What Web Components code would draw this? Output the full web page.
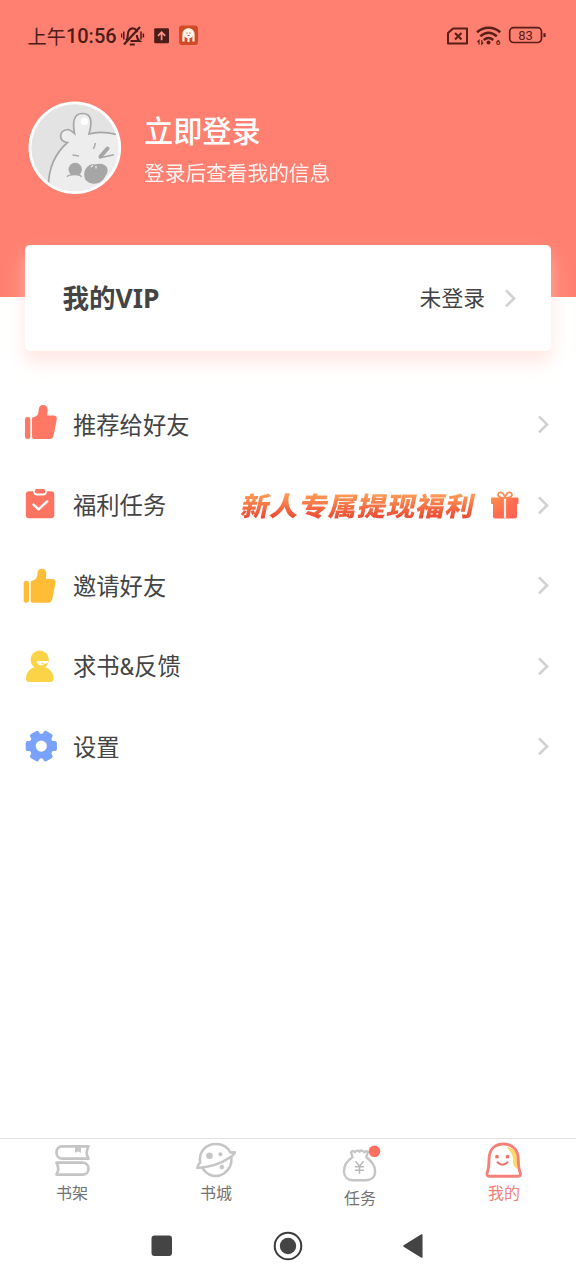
<!DOCTYPE html>
<html lang="zh-CN">
<head>
<meta charset="utf-8">
<title>我的</title>
<style>
html,body{margin:0;padding:0;background:#fff}
body{width:576px;height:1280px;overflow:hidden;font-family:Roboto,"Noto Sans CJK SC",sans-serif;color:#444}
</style>
</head>
<body>
<profile-page></profile-page>
<script>
const define=(name,html)=>customElements.define(name,class extends HTMLElement{
  constructor(){super();this.attachShadow({mode:'open'});}
  connectedCallback(){
    const t=document.createElement('template');
    t.innerHTML=typeof html==='function'?html(this):html;
    this.shadowRoot.replaceChildren(t.content.cloneNode(true));
  }
});

const thumb='<rect x="5" y="12.5" width="5.3" height="22" rx="2.4"/><path d="M12 14.2q0-1.7 1.7-1.9c3.5-.5 4.700-2.600 4.900-6.500C18.700 2.300 20.500.500 23.200.500c3 0 4.500 2 4.400 5l-.4 5.300h6.300c2.400 0 3.800 1.500 3.300 3.800l-3.200 16.200c-.5 2.400-1.900 3.700-4.200 3.700H14.500q-2.500 0-2.500-2.500z"/>';
const icons={
  like:`<g fill="#ff7866" transform="translate(0 .6)">${thumb}</g>`,
  invite:`<g fill="#ffbd35" transform="translate(-1.300 3.300)">${thumb}</g>`,
  task:'<path fill="#ff7362" d="M9 6.200h4.200q.4 4.300 3.500 4.300h6.800q3.100 0 3.500-4.300H31q3.300 0 3.300 3.300v20.500q0 3.200-3.300 3.200H9q-3.200 0-3.200-3.200V9.500q0-3.300 3.200-3.300z"/><rect fill="#ff7362" x="14.800" y="4" width="10.500" height="4.600" rx="2"/><path d="m13.500 19.700 5 4.600 8.700-8" fill="none" stroke="#fff" stroke-width="2.500" stroke-linecap="round" stroke-linejoin="round"/>',
  person:'<circle cx="19.700" cy="13.800" r="9.200" fill="#fad347"/><path d="M6 32.500c0-7.500 6-12 13.700-12s13.900 4.500 13.900 12q0 3.500-3.500 3.500H9.500Q6 36 6 32.500z" fill="#fad347"/><path d="M16.800 15h11.400q.8.500 0 1.400-1.800 1.400-4.200 1.700-1.500 1.500-3.300 1.300-3.400-.6-3.900-4.400z" fill="#fff"/><path d="M21.500 17.300h2" stroke="#fad347" stroke-width="1.200"/>',
  gear:'<g transform="translate(21.300 20.100)" fill="#7aa2fb"><circle r="12.300"/><g id="t"><rect x="-15.600" y="-5" width="31.200" height="10" rx="2.200"/><rect x="-15.600" y="-5" width="31.200" height="10" rx="2.200" transform="rotate(60)"/><rect x="-15.600" y="-5" width="31.200" height="10" rx="2.200" transform="rotate(120)"/></g><circle r="5.600" fill="#fff"/></g>'
};
define('menu-icon',el=>`<style>:host{display:block;width:40px;height:40px}svg{display:block}</style><svg width="40" height="40" viewBox="0 0 40 40">${icons[el.getAttribute('name')]}</svg>`);

define('chevron-icon','<style>:host{display:block;width:14px;height:20px}svg{display:block}</style><svg width="14" height="20" viewBox="0 0 14 20" fill="none" stroke="#d2d2d2" stroke-width="2.700"><path d="m2 2.400 8 8-8 8"/></svg>');

define('status-bar',`<style>
:host{display:flex;height:72px;box-sizing:border-box;padding:0 28px 0 27.500px;align-items:center;color:#4b1d1a}
.time{font-size:20px;line-height:28px;white-space:nowrap;width:93.500px;font-weight:500}
.zh{font-size:19.200px;font-weight:400}
.time,.zh{position:relative;top:.5px}
svg{display:block;flex:none}.right{margin-left:auto}
.bat text{font:400 13px Roboto,sans-serif}
</style>
<span class="time"><span class="zh">上午</span>10:56</span>
<svg width="80" height="24" viewBox="121 24 80 24" fill="none" stroke="#4b1d1a">
 <path d="M126 40.500c1.700-1.400 1.800-3 1.800-5.500 0-4 1.500-6.200 4.700-6.800 2.500.2 4.200 1.500 4.700 4M130.500 41h9c-2.300-1.800-2.600-3.200-2.700-6M129.800 44.500h5" stroke-width="2"/>
 <path d="m124 44.500 16-17.500" stroke-width="2.200"/>
 <path d="M123.800 31.500v8M121.500 33.500v4M141 31.500v8M143.400 33.500v4" stroke-width="1.500"/>
 <rect x="154.200" y="28.200" width="14.800" height="15" rx="1.200" fill="#4b1d1a" stroke="none"/>
 <path d="M161.600 40.300v-8m-3.600 3.500 3.600-3.600 3.600 3.600" stroke="#ff9588" stroke-width="1.700"/>
 <rect x="179" y="25.500" width="19" height="19.500" rx="3" fill="#cf4c27" stroke="none"/>
 <path d="M183.500 41.500v-7c0-7 10-7 10 0v7" stroke="#fff0e6" stroke-width="2.200"/><circle cx="188.500" cy="33.500" r="5" fill="#fff3ea" stroke="none"/><path d="M188.500 38v4" stroke="#fff0e6" stroke-width="2"/><path d="M186.300 33h1.300m1.700 0h1.300M187.500 35.500h2" stroke="#a05040" stroke-width=".9"/>
</svg>
<svg class="bat right" style="margin-right:1px" width="100" height="24" viewBox="447 24 100 24" fill="none" stroke="#591e1a">
 <path d="M453 28.500h14v15h-19V33z" stroke-width="2" stroke-linejoin="round"/><path d="m455 33 6.500 6.500m0-6.500-6.500 6.500" stroke-width="2.100"/>
 <path d="M477 32.200c7-6 16.500-6 23.200 0M480.300 36.200c5.300-4.400 11.300-4.400 16.500 0M483.700 40c3.300-2.600 6.400-2.600 9.600 0" stroke-width="2.500"/><circle cx="488.500" cy="42.500" r="2" fill="#591e1a" stroke="none"/>
 <path d="M479 44.500v-4l-1.500 1.500M481.800 40v4l1.400-1.400" stroke-width="1.200"/>
 <text x="495.800" y="45" fill="#591e1a" stroke="none" style="font-size:8px;font-weight:700">6</text>
 <rect x="509.700" y="27.700" width="31.800" height="14.800" rx="4" stroke-width="1.700"/><path d="M544.500 33.200v3.800" stroke-width="2.200"/>
 <text x="525.500" y="39.900" text-anchor="middle" fill="#591e1a" stroke="none">83</text>
</svg>`);

define('user-avatar',`<style>:host{display:block;width:94px;height:94px;flex:none}svg{display:block}</style>
<svg width="94" height="94" viewBox="28.500 101 94 94">
<defs><clipPath id="c"><circle cx="75.300" cy="147.800" r="43.500"/></clipPath></defs>
<circle cx="75.300" cy="147.800" r="46.300" fill="#fff"/><circle cx="75.300" cy="147.800" r="43.500" fill="#e3e3e3"/>
<g clip-path="url(#c)"><path d="M49 186c0-18 6-32 19-43.500-9.500-1.500-9-12 .5-13 2.500.5 4.500 2 6.500 4-2-11-1.200-20 8-20s10 8.500 6.500 20.500c9-2.800 17-2 28 .5H140V200H49z" fill="#ededed" stroke="#a6a6a6" stroke-width="1.700"/>
<circle cx="85" cy="121.500" r="3.700" fill="#fff"/><path d="m96 143-2 6M73 155l6.500 1" stroke="#aaa" stroke-width="1.500" fill="none"/>
<path d="m108 148.500-7 8" stroke="#a6a6a6" stroke-width="4" stroke-linecap="round"/><path d="m99.500 158 15-3.300" stroke="#a6a6a6" stroke-width="1.600"/>
<circle cx="75.700" cy="169.500" r="6.700" fill="#a6a6a6"/><path d="M67.500 178.500q0-2.500 2.500-2.800 6-2.200 11.500 0l1 4H68z" fill="#ededed"/><path d="M67.500 177q1-2 3-1.900 5-1 9 0 1.500 0 2.500 2" stroke="#a6a6a6" stroke-width="1.200" fill="none"/>
<path d="M86 180c-4-8 2-17 9-15.500 12-3 16.500 5 10.500 12-3 8-14 9.500-19.500 3.500z" fill="#a6a6a6"/><path d="m91.500 167 2-1.500m3 3v-2.500" stroke="#eee" stroke-width="1.300"/></g></svg>`);

define('profile-header',`<style>
:host{display:block;height:296.500px;background:#ff8071;color:#fff}
.user{display:flex;align-items:center;margin:29px 0 0 28px;gap:22px;height:94px}
h1{margin:0;font:500 29.200px/38px "Noto Sans CJK SC",sans-serif}
p{margin:9px 0 0;font-size:20.700px;line-height:34px;opacity:.9}
.copy{margin-top:4px}
</style><status-bar></status-bar>
<div class="user"><user-avatar></user-avatar><div class="copy"><h1>立即登录</h1><p>登录后查看我的信息</p></div></div>`);

define('vip-card',`<style>
:host{display:flex;align-items:center;position:relative;box-sizing:border-box;width:526px;height:105.500px;margin:-51.500px auto 0;padding:0 33px 0 37.500px;background:#fff;border-radius:5px;box-shadow:0 11px 18px rgba(255,214,206,.6)}
h2{margin:0;font:700 26.500px/40px "Noto Sans","Noto Sans CJK SC",sans-serif;color:#444}
.state{margin:3px 19px 0 auto;font-size:21.800px;line-height:32px}
</style><h2>我的VIP</h2><span class="state">未登录</span><chevron-icon></chevron-icon>`);

define('promo-banner',`<style>
:host{display:flex;align-items:center;margin-left:auto}
.t{font:900 28.500px/36px "Noto Sans CJK SC",sans-serif;letter-spacing:.7px;transform:skewX(-12deg) scaleY(.93);background:linear-gradient(#ff9c58 18%,#ec4d34 85%);-webkit-background-clip:text;background-clip:text;color:transparent;white-space:nowrap}
svg{display:block;margin:0 17px 0 14px}
</style><span class="t">新人专属提现福利</span>
<svg width="30" height="30" viewBox="0 0 30 30"><defs><linearGradient id="g" x1="0" x2="1" y2="1"><stop stop-color="#ff914f"/><stop offset=".5" stop-color="#ff6d50"/><stop offset="1" stop-color="#ff6257"/></linearGradient></defs>
<path fill="url(#g)" d="M2 7.500h25.500q1 0 1 1v4.500q0 1-1 1h-.5v12.500q0 2-2 2H5q-2 0-2-2V14H2q-1 0-1-1V8.500q0-1 1-1z"/><path d="M15 8v20.500" stroke="#ffece4" stroke-width="2.200"/><path d="M15 8Q8.500 8 8 5c0-3.800 5.500-4.200 7 3 1.500-7.200 7-6.800 7-3q-.5 3-7 3z" fill="none" stroke="#f88b55" stroke-width="1.700"/></svg>`);

define('menu-row',el=>`<style>
:host{display:flex;align-items:center;height:80.500px;padding:0 25px 0 20px}
.label{margin:3px 0 0 13px;font-size:23.300px;line-height:34px;color:#444;white-space:nowrap}
chevron-icon{margin-left:auto}
::slotted(promo-banner){margin-left:auto}
chevron-icon.tight{margin-left:0}
</style><menu-icon name="${el.getAttribute('icon')}"></menu-icon><span class="label">${el.getAttribute('label')}</span><slot></slot><chevron-icon class="${el.children.length?'tight':''}"></chevron-icon>`);

const tabs={
 shelf:'<g transform="translate(-1.500 1)"><g stroke="#c5c5c5" stroke-width="2.700" stroke-linejoin="round"><path d="M39 3.300H13c-8 0-8 12.400 0 12.400h26q-3.500-6 0-12.400zM7 19.700h26c8 0 8 11.900 0 11.900H7q3.500-6 0-11.900z"/></g><path d="M25.500 4h6v5.700l-3-1.300-3 1.300z" fill="#c5c5c5"/></g>',
 city:'<g stroke="#c5c5c5" stroke-width="2.500" stroke-linecap="round" stroke-linejoin="round"><path d="M5.200 20.500C3.500 9.500 11 2 20.800 2c6.500 0 11.800 3 14.600 8.500l4.400-.2q-.5 2.500-5.300 5.500C23 23.500 13 25.500 2.300 26q.3-3 2.900-5.500z"/><path d="M7.800 26.500C13 34.500 22 36 29 31.500c5.500-4 8-9.500 7.400-16"/></g><g fill="#c5c5c5"><circle cx="14.500" cy="13.800" r="3.300"/><circle cx="25.500" cy="12.300" r="2"/><circle cx="26.800" cy="25" r="2.200"/></g>',
 task:'<g transform="translate(-1 -1.300)"><path d="M14.500 11.500 13 6.500q2-2.300 4 0 2-3 4.500-.500 2.500-2.500 4.500.500 2.500-2 4 0l-1.700 5c5.500 4 8.800 9 8.800 14 0 6-4 9-9 9H14.500c-5 0-8.500-3.500-8.500-9 0-5.500 3-10.500 8.500-14z" stroke="#c5c5c5" stroke-width="2.400" stroke-linejoin="round"/><path d="m17.500 15.500 4 5 4-5M17 21h9m-9 3.500h9M21.500 21v7" stroke="#b9b9b9" stroke-width="1.500"/></g><circle cx="35.500" cy="4.300" r="5.800" fill="#ff7061"/>',
 mine:'<g transform="translate(-1 .2)"><path d="M24.500 5c7 0 10.500 5 10.500 12.500 0 3.500 0 6 .5 9-4.500-2-4.500-6-4.500-9.500-.3-5-2.500-8-6.500-12z" fill="#ffd968"/><path d="M6.800 34q-2.300-.5-1.600-3.500C6.500 27 7 23 7 17.500 7 7 13 1.800 21.500 1.800S36.300 7 36.300 17.500c0 5.500.500 9.500 2 13q.6 3-1.700 3.500z" stroke="#f5807a" stroke-width="2.900" stroke-linejoin="round"/><circle cx="15" cy="14.500" r="1.900" fill="#ee756c"/><circle cx="25.500" cy="14.500" r="1.900" fill="#ee756c"/><path d="M15.500 20q5 5 10 0" stroke="#ee756c" stroke-width="2" stroke-linecap="round"/></g>'
};
define('tab-item',el=>`<style>
:host{display:flex;flex:1;flex-direction:column;align-items:center;padding-top:3px;color:#737373}
:host([icon="task"]){padding-top:8px}
:host([active]){color:#f08078}
svg{display:block}span{font-size:16px;line-height:24px;margin-top:5px}
</style><svg width="43" height="35" viewBox="0 0 43 35" fill="none" style="overflow:visible">${tabs[el.getAttribute('icon')]}</svg><span><slot></slot></span>`);

define('tab-bar',`<style>:host{display:flex;height:72px;border-top:1px solid #e3e3e3}</style>
<tab-item icon="shelf">书架</tab-item><tab-item icon="city">书城</tab-item><tab-item icon="task">任务</tab-item><tab-item icon="mine" active>我的</tab-item>`);

define('system-nav',`<style>:host{display:flex;height:69px;box-sizing:border-box;padding:0 152px 0 151px;align-items:center;justify-content:space-between}svg{display:block}</style>
<svg width="22" height="22"><rect x=".5" y=".5" width="20.500" height="20.500" rx="3" fill="#444"/></svg>
<svg width="30" height="30"><circle cx="15" cy="15" r="13.300" fill="none" stroke="#3c3c3c" stroke-width="2"/><circle cx="15" cy="15" r="8.200" fill="#444"/></svg>
<svg width="22" height="26"><path d="M2 13 19.800 2v22z" fill="#444" stroke="#444" stroke-width="1.500" stroke-linejoin="round"/></svg>`);

define('profile-page',`<style>:host{display:flex;flex-direction:column;width:576px;height:1280px;background:#fff}profile-header,vip-card,tab-bar,system-nav{flex:none}nav{margin-top:33.700px;flex:1}</style>
<profile-header></profile-header><vip-card></vip-card>
<nav><menu-row icon="like" label="推荐给好友"></menu-row><menu-row icon="task" label="福利任务"><promo-banner></promo-banner></menu-row><menu-row icon="invite" label="邀请好友"></menu-row><menu-row icon="person" label="求书&amp;amp;反馈"></menu-row><menu-row icon="gear" label="设置"></menu-row></nav>
<tab-bar></tab-bar><system-nav></system-nav>`);
</script>
</body>
</html>
